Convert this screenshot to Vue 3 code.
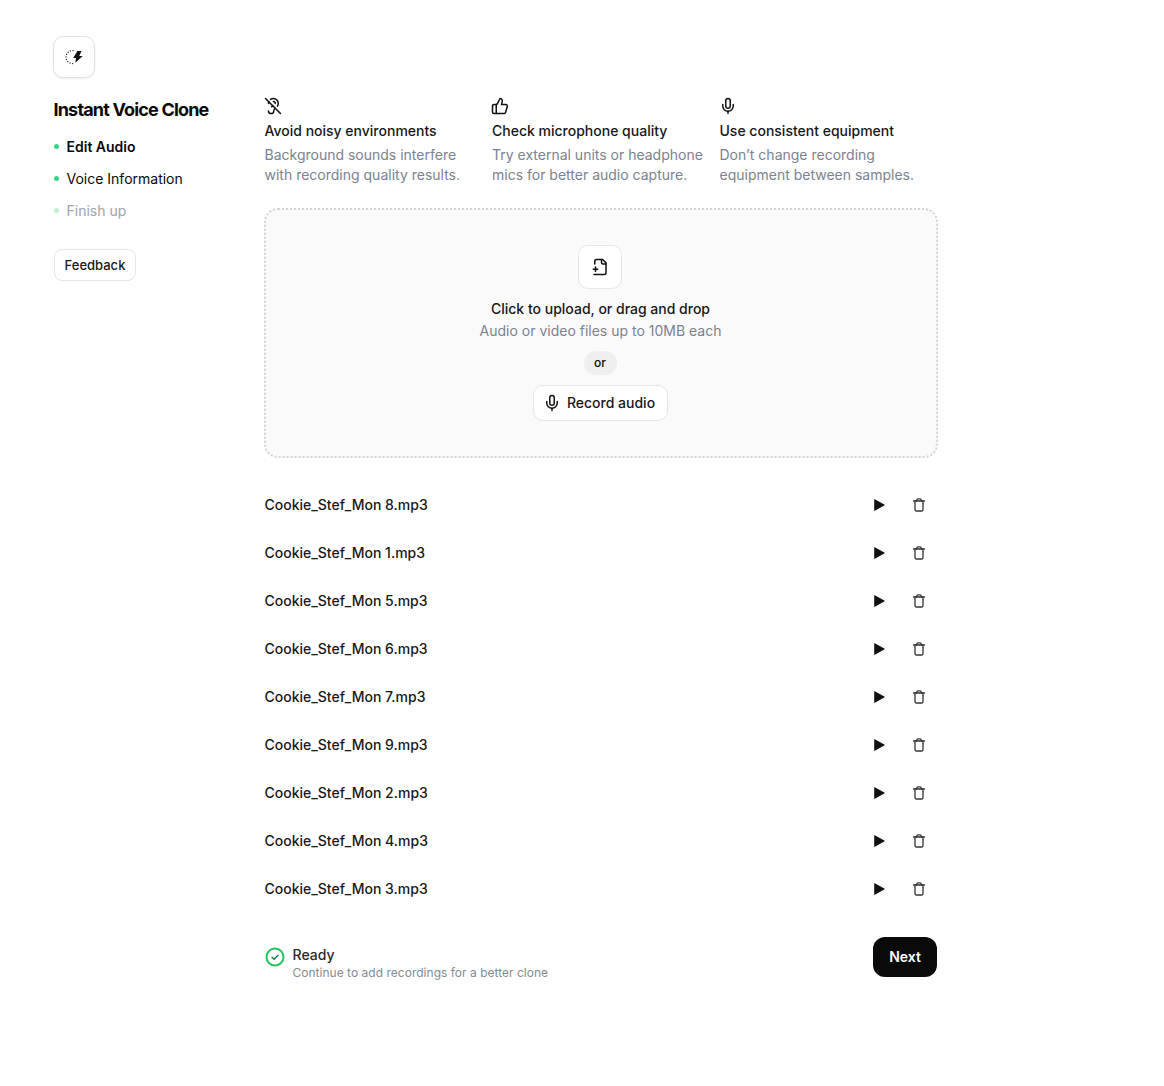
<template>
  <div class="page">
    <div class="logo-box">
      <svg width="18" height="18" viewBox="0 0 18 18" fill="none">
        <path d="M8 2.6A6.5 6.5 0 1 0 9 15.4" stroke="#222" stroke-width="1.3" stroke-dasharray="0.1 2.5" stroke-linecap="round" />
        <path d="M12.4 3 L8.2 10 H11 L10.3 14.7 L17.7 7.9 H14.3 L16.5 3 Z" fill="#111" />
      </svg>
    </div>

    <div class="layout">
      <aside class="sidebar">
        <h1 class="title">Instant Voice Clone</h1>
        <ul class="steps">
          <li v-for="step in steps" :key="step.label" class="step" :class="step.state">
            <span class="dot"></span>{{ step.label }}
          </li>
        </ul>
        <button class="feedback">Feedback</button>
      </aside>

      <main class="main">
        <section class="tips">
          <div class="tip">
            <svg class="tip-icon" width="18" height="18" viewBox="0 0 24 24" fill="none" stroke="#111" stroke-width="2" stroke-linecap="round" stroke-linejoin="round">
              <path d="M6 18.5a3.5 3.5 0 1 0 7 0c0-1.57.92-2.52 2.04-3.46" />
              <path d="M6 8.5c0-.75.13-1.47.36-2.14" />
              <path d="M8.8 3.15A6.5 6.5 0 0 1 19 8.5c0 1.63-.44 2.81-1.09 3.76" />
              <path d="M12.5 6A2.5 2.5 0 0 1 15 8.5M10 13a2 2 0 0 0 1.82-1.18" />
              <path d="m2 2 20 20" />
            </svg>
            <div class="tip-title">Avoid noisy environments</div>
            <p class="tip-text">Background sounds interfere with recording quality results.</p>
          </div>
          <div class="tip">
            <svg class="tip-icon" width="18" height="18" viewBox="0 0 24 24" fill="none" stroke="#111" stroke-width="2" stroke-linecap="round" stroke-linejoin="round">
              <path d="M7 10v12" />
              <path d="M15 5.88 14 10h5.83a2 2 0 0 1 1.92 2.56l-2.33 8A2 2 0 0 1 17.5 22H4a2 2 0 0 1-2-2v-8a2 2 0 0 1 2-2h2.76a2 2 0 0 0 1.79-1.11L12 2a3.13 3.13 0 0 1 3 3.88Z" />
            </svg>
            <div class="tip-title">Check microphone quality</div>
            <p class="tip-text">Try external units or headphone mics for better audio capture.</p>
          </div>
          <div class="tip">
            <svg class="tip-icon" width="18" height="18" viewBox="0 0 24 24" fill="none" stroke="#111" stroke-width="2" stroke-linecap="round" stroke-linejoin="round">
              <path d="M12 2a3 3 0 0 0-3 3v7a3 3 0 0 0 6 0V5a3 3 0 0 0-3-3Z" />
              <path d="M19 10v2a7 7 0 0 1-14 0v-2" />
              <path d="M12 19v3" />
            </svg>
            <div class="tip-title">Use consistent equipment</div>
            <p class="tip-text">Don’t change recording equipment between samples.</p>
          </div>
        </section>

        <section class="dropzone">
          <div class="file-box">
            <svg width="18" height="18" viewBox="0 0 24 24" fill="none" stroke="#111" stroke-width="2" stroke-linecap="round" stroke-linejoin="round">
              <path d="M5 8V4a2 2 0 0 1 2-2h8.5L20 6.5V20a2 2 0 0 1-2 2H4" />
              <path d="M14 2v4a2 2 0 0 0 2 2h4" />
              <path d="M3 15h6" />
              <path d="M6 12v6" />
            </svg>
          </div>
          <div class="drop-title">Click to upload, or drag and drop</div>
          <div class="drop-sub">Audio or video files up to 10MB each</div>
          <span class="or">or</span>
          <button class="record">
            <svg width="18" height="18" viewBox="0 0 24 24" fill="none" stroke="#111" stroke-width="2" stroke-linecap="round" stroke-linejoin="round">
              <path d="M12 2a3 3 0 0 0-3 3v7a3 3 0 0 0 6 0V5a3 3 0 0 0-3-3Z" />
              <path d="M19 10v2a7 7 0 0 1-14 0v-2" />
              <path d="M12 19v3" />
            </svg>
            <span class="record-label">Record audio</span>
          </button>
        </section>

        <section class="files">
          <div v-for="file in files" :key="file" class="file">
            <span class="file-name">{{ file }}</span>
            <svg class="play" width="16" height="16" viewBox="0 0 16 16">
              <path d="M3.2 2.6v10.8a.4.4 0 0 0 .6.34l9.9-5.4a.4.4 0 0 0 0-.68l-9.9-5.4a.4.4 0 0 0-.6.34Z" fill="#111" />
            </svg>
            <svg class="trash" width="16" height="16" viewBox="0 0 16 16" fill="none" stroke="#333" stroke-width="1.3" stroke-linecap="round" stroke-linejoin="round">
              <path d="M2.5 4h11" />
              <path d="M4 4v8.5A1.5 1.5 0 0 0 5.5 14h5a1.5 1.5 0 0 0 1.5-1.5V4" />
              <path d="M5.8 4V3a1.2 1.2 0 0 1 1.2-1.2h2A1.2 1.2 0 0 1 10.2 3v1" />
            </svg>
          </div>
        </section>

        <footer class="status">
          <svg width="20" height="20" viewBox="0 0 20 20" fill="none">
            <circle cx="10" cy="10" r="8.5" stroke="#22c55e" stroke-width="2" />
            <path d="m7 10.2 2.1 2.1L13 8.2" stroke="#15803d" stroke-width="1.4" stroke-linecap="round" stroke-linejoin="round" />
          </svg>
          <div class="status-text">
            <div class="status-title">Ready</div>
            <div class="status-sub">Continue to add recordings for a better clone</div>
          </div>
          <button class="next">Next</button>
        </footer>
      </main>
    </div>
  </div>
</template>

<script setup>
const steps = [
  { label: 'Edit Audio', state: 'active' },
  { label: 'Voice Information', state: 'done' },
  { label: 'Finish up', state: 'todo' }
]

const files = [8, 1, 5, 6, 7, 9, 2, 4, 3].map((n) => `Cookie_Stef_Mon ${n}.mp3`)
</script>

<style>
body {
  background: #fff;
}
</style>

<style scoped>
.page {
  padding: 36px 0 0 53px;
  font-family: Inter, "Liberation Sans", sans-serif;
  font-size: 14px;
  color: #0a0a0a;
  height: 1050px;
  box-sizing: border-box;
  overflow: hidden;
}

.logo-box {
  width: 42px;
  height: 42px;
  box-sizing: border-box;
  border: 1px solid #e2e2e2;
  border-radius: 10px;
  box-shadow: 0 1px 2px rgba(0, 0, 0, 0.08);
  display: flex;
  align-items: center;
  justify-content: center;
}

.layout {
  display: flex;
  margin-top: 18px;
}

.sidebar {
  width: 211px;
  flex: none;
  padding-top: 3px;
}

.title {
  margin: 0 0 0 0.5px;
  font-size: 18px;
  line-height: 22px;
  font-weight: 700;
  letter-spacing: -0.82px;
  color: #0a0a0a;
}

.steps {
  list-style: none;
  margin: 9px 0 0;
  padding: 0;
}

.step {
  height: 32px;
  display: flex;
  align-items: center;
  font-size: 14px;
}

.dot {
  width: 5px;
  height: 5px;
  border-radius: 50%;
  background: #34d585;
  margin: 0 7.5px 0 1px;
}

.step.active {
  font-weight: 600;
}

.step.todo {
  color: #9ca3af;
}

.step.todo .dot {
  background: #bbf0d2;
}

.feedback {
  margin: 23px 0 0 1px;
  height: 32px;
  width: 82px;
  padding: 0;
  background: #fff;
  border: 1px solid #e5e5e5;
  border-radius: 8px;
  font: 500 13px Inter, "Liberation Sans", sans-serif;
  color: #171717;
}

.main {
  width: 674px;
  flex: none;
}

.tips {
  display: grid;
  grid-template-columns: repeat(3, 211.5px);
  column-gap: 16px;
  padding-left: 0.5px;
}

.tip-icon {
  display: block;
  margin: 0.5px 0 0 -1px;
}

.tip-title {
  margin-top: 6.5px;
  font-weight: 500;
  line-height: 20px;
  color: #171717;
}

.tip-text {
  margin: 4px 0 0;
  line-height: 20px;
  color: #7b8290;
}

.dropzone {
  margin-top: 23px;
  height: 250px;
  box-sizing: border-box;
  border: 2px dotted #d4d4d4;
  border-radius: 14px;
  background: #fafafa;
  display: flex;
  flex-direction: column;
  align-items: center;
  padding: 35px 2px 0 0;
}

.file-box {
  width: 44px;
  height: 44px;
  box-sizing: border-box;
  background: #fff;
  border: 1px solid #e8e8e8;
  border-radius: 10px;
  display: flex;
  align-items: center;
  justify-content: center;
}

.drop-title {
  margin-top: 10px;
  padding-left: 1px;
  font-weight: 500;
  line-height: 20px;
  color: #171717;
}

.drop-sub {
  margin-top: 2px;
  padding-left: 1px;
  line-height: 20px;
  color: #7b8290;
}

.or {
  margin-top: 10px;
  width: 33px;
  height: 24px;
  line-height: 24px;
  text-align: center;
  border-radius: 12px;
  background: #efefef;
  font-size: 12px;
  font-weight: 500;
}

.record {
  margin-top: 10px;
  height: 36px;
  width: 135px;
  padding: 0 2px 0 0;
  background: #fff;
  border: 1px solid #e5e5e5;
  border-radius: 10px;
  display: flex;
  align-items: center;
  justify-content: center;
  gap: 6px;
  font: 500 14px Inter, "Liberation Sans", sans-serif;
  color: #171717;
}

.record-label {
  padding-bottom: 2px;
}

.files {
  margin-top: 23px;
}

.file {
  height: 48px;
  display: flex;
  align-items: center;
  padding-left: 0.5px;
}

.file-name {
  flex: 1;
  font-weight: 500;
  padding-bottom: 2px;
  color: #171717;
}

.play {
  margin-right: 24px;
}

.trash {
  margin-right: 11px;
}

.status {
  margin-top: 24px;
  height: 40px;
  display: flex;
  align-items: center;
  padding: 0 1px;
}

.status-text {
  flex: 1;
  align-self: flex-start;
  margin: 9px 0 0 7.5px;
}

.status-title {
  line-height: 18px;
  font-weight: 500;
  color: #2a2a2a;
}

.status-sub {
  margin-top: 1px;
  font-size: 12px;
  line-height: 16px;
  letter-spacing: 0.02px;
  color: #858a94;
}

.next {
  width: 64px;
  height: 40px;
  padding: 0 0 2px;
  background: #0a0a0a;
  color: #fff;
  border: none;
  border-radius: 12px;
  font: 600 14px Inter, "Liberation Sans", sans-serif;
}
</style>
